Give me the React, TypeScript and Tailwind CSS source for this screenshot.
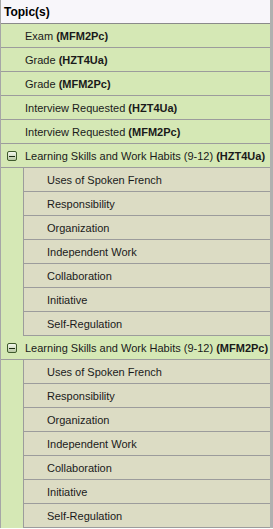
import React from "react";

const children = [
  "Uses of Spoken French",
  "Responsibility",
  "Organization",
  "Independent Work",
  "Collaboration",
  "Initiative",
  "Self-Regulation",
];

const topRows: [string, string][] = [
  ["Exam", "MFM2Pc"],
  ["Grade", "HZT4Ua"],
  ["Grade", "MFM2Pc"],
  ["Interview Requested", "HZT4Ua"],
  ["Interview Requested", "MFM2Pc"],
];

function MinusBox() {
  return (
    <span className="flex h-[10px] w-[10px] items-center justify-center rounded-[2px] border border-[#3f5a2c] bg-gradient-to-b from-[#f4f8ee] to-[#b9c9a4]">
      <span className="h-[1px] w-[6px] bg-[#1c2a12]" />
    </span>
  );
}

function GroupRow({ code }: { code: string }) {
  return (
    <>
      <div className="flex h-[24px] items-center whitespace-nowrap border-b border-[#9c9c9c] bg-[#d5e8b5] pt-[1px]">
        <span className="ml-[6px] mr-[8px]">
          <MinusBox />
        </span>
        <span>
          Learning Skills and Work Habits (9-12) <b>({code})</b>
        </span>
      </div>
      {children.map((c) => (
        <div key={c} className="flex h-[24px] bg-[#d5e8b5]">
          <div className="w-[22px] shrink-0" />
          <div className="flex flex-1 items-center border-b border-l border-[#9c9c9c] bg-[#dcdcc4] pl-[23px] pt-[1px]">
            {c}
          </div>
        </div>
      ))}
    </>
  );
}

export default function App() {
  return (
    <div
      className="h-[529px] w-[273px] overflow-hidden bg-white text-[11px] text-[#1a1a1a]"
      style={{ fontFamily: "'Liberation Sans', Arial, sans-serif" }}
    >
      <div className="flex w-[273px] flex-col border-l border-r-[3px] border-[#a6a6a6] border-r-[#b0b0b0]">
        <div className="flex h-[24px] items-center border-b border-[#8a8a8a] bg-[#f8f6fa] pl-[3px] text-[12px] font-bold text-black">
          Topic(s)
        </div>
        {topRows.map(([t, c], i) => (
          <div
            key={i}
            className="flex h-[24px] items-center whitespace-nowrap border-b border-[#9c9c9c] bg-[#d5e8b5] pl-[24px] pt-[1px]"
          >
            {t}&nbsp;<b>({c})</b>
          </div>
        ))}
        <GroupRow code="HZT4Ua" />
        <GroupRow code="MFM2Pc" />
      </div>
    </div>
  );
}
